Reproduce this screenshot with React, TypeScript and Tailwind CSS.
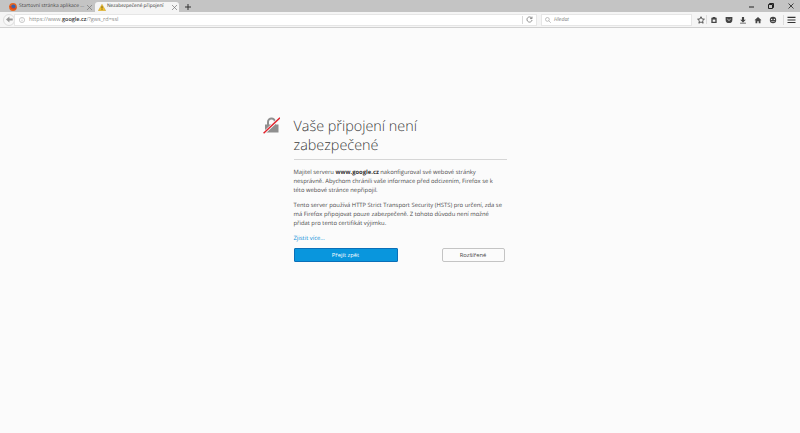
import React from 'react';

const Close = () => (
  <svg width="7" height="7" viewBox="0 0 7 7" className="shrink-0" stroke="#777" strokeWidth="0.7">
    <path d="M1 1l5 5M6 1L1 6" />
  </svg>
);

const FirefoxLogo = () => (
  <svg width="8" height="8" viewBox="0 0 8 8" className="shrink-0">
    <circle cx="4" cy="4" r="3.9" fill="#e8651f" />
    <circle cx="4.4" cy="3.6" r="2.2" fill="#3a5fa8" />
    <path d="M0.3 3C1 6 4 7 6 6.4 7.4 5.8 7.8 4.6 7.8 3.6 7 6 3 6 2 3z" fill="#d9481c" />
  </svg>
);

const WarningIcon = () => (
  <svg width="8" height="7" viewBox="0 0 9 8" className="shrink-0">
    <path d="M4.5 0.3L8.8 7.7H0.2z" fill="#f2c12e" stroke="#b58a14" strokeWidth="0.4" />
    <path d="M4.5 2.6v2.6M4.5 5.9v0.8" stroke="#4a3a0c" strokeWidth="0.9" />
  </svg>
);

const ToolIcon = ({ children }: { children: React.ReactNode }) => (
  <svg width="8" height="8" viewBox="0 0 9 9" className="shrink-0" fill="#444">
    {children}
  </svg>
);

export default function App() {
  return (
    <div className="flex h-[433px] w-[800px] flex-col overflow-hidden bg-[#fbfbfb] font-['Open_Sans',sans-serif] [text-rendering:geometricPrecision]">
      {/* Tab strip */}
      <div className="flex h-[12px] shrink-0 items-end bg-[#c4c4c4]">
        <div className="flex h-[10px] w-[95px] items-center gap-[2px] pl-[9px] pr-[5px]">
          <FirefoxLogo />
          <span className="flex-1 whitespace-nowrap text-[5px] text-[#444]">Startovní stránka aplikace ...</span>
          <Close />
        </div>
        <div className="flex h-[10px] w-[84px] items-center gap-[1px] rounded-t-[3px] bg-[#f5f5f5] pl-[3px] pr-[1px]">
          <WarningIcon />
          <span className="flex-1 whitespace-nowrap text-[4.8px] text-[#333]">Nezabezpečené připojení</span>
          <Close />
        </div>
        <div className="flex h-[10px] items-center pl-[5px]">
          <svg width="8" height="8" viewBox="0 0 8 8" className="shrink-0" stroke="#333" strokeWidth="1">
            <path d="M4 1v6M1 4h6" />
          </svg>
        </div>
        <div className="ml-auto flex h-full items-center gap-[14px] pr-[6px]">
          <svg width="5" height="5" viewBox="0 0 5 5" stroke="#222"><path d="M0 3h5" /></svg>
          <svg width="6" height="6" viewBox="0 0 6 6" fill="none" stroke="#222"><path d="M0.5 1.5h4v4h-4zM1.5 1.5v-1h4v4h-1" /></svg>
          <svg width="6" height="6" viewBox="0 0 6 6" stroke="#222" strokeWidth="0.8"><path d="M0.5 0.5l5 5M5.5 0.5l-5 5" /></svg>
        </div>
      </div>

      {/* Nav toolbar */}
      <div className="flex h-[16px] shrink-0 items-center border-b border-[#d0d0d0] bg-[#f5f5f5]">
        <div className="ml-[3px] flex h-[12px] w-[12px] shrink-0 items-center justify-center rounded-full border border-[#dcdcdc] bg-[#f8f8f8]">
          <svg width="7" height="7" viewBox="0 0 7 7" fill="#999"><path d="M0 3.5L3.4 0.5v2h3.3v2H3.4v2z" /></svg>
        </div>
        <div className="-ml-px flex h-[12px] w-[523px] shrink-0 items-center gap-1 border border-[#e6e6e6] bg-white pl-[4px]">
          <svg width="6" height="6" viewBox="0 0 6 6" fill="none" stroke="#aaa" strokeWidth="0.6">
            <circle cx="3" cy="3" r="2.6" />
            <path d="M3 2.6v1.8M3 1.4v0.6" />
          </svg>
          <span className="text-[5.5px] text-[#8a8a8a]">
            https://www.<span className="font-semibold text-[#333]">google.cz</span>/?gws_rd=ssl
          </span>
          <div className="ml-auto flex h-full items-center gap-[3px] pr-[3px]">
            <div className="h-[8px] w-px bg-[#d8d8d8]" />
            <svg width="7" height="7" viewBox="0 0 7 7" fill="none" stroke="#666" strokeWidth="0.7">
              <path d="M5.8 2.2A2.6 2.6 0 1 0 6.1 4" />
              <path d="M6 0.6v2H4" />
            </svg>
          </div>
        </div>
        <div className="ml-[4px] flex h-[12px] w-[151px] shrink-0 items-center gap-[3px] border border-[#e6e6e6] bg-white pl-[3px]">
          <svg width="6" height="6" viewBox="0 0 6 6" fill="none" stroke="#999" strokeWidth="0.6">
            <circle cx="2.4" cy="2.4" r="1.9" />
            <path d="M3.8 3.8L5.8 5.8" />
          </svg>
          <span className="text-[5.2px] italic text-[#777]">Hledat</span>
        </div>
        <div className="ml-[5px] flex items-center">
          <ToolIcon>
            <path d="M4.5 0.8l1.1 2.5 2.7.3-2 1.8.6 2.7-2.4-1.4-2.4 1.4.6-2.7-2-1.8 2.7-.3z" fill="none" stroke="#333" strokeWidth="0.9" />
          </ToolIcon>
          <div className="ml-[1px] mr-[3px] h-[9px] w-px bg-[#dcdcdc]" />
          <div className="flex items-center gap-[6.7px]">
            <ToolIcon>
              <path d="M1.5 2h6v6h-6zM3 1h3v1.5H3z" />
              <path d="M3 4h3v2.5H3z" fill="#f5f5f5" />
            </ToolIcon>
            <ToolIcon>
              <path d="M0.7 1.2h7.6v3a3.8 3.8 0 0 1-7.6 0z" />
              <path d="M2.6 3.4l1.9 1.7 1.9-1.7" stroke="#f5f5f5" strokeWidth="0.8" fill="none" />
            </ToolIcon>
            <ToolIcon>
              <path d="M3.3 1h2.4v3.2h2L4.5 7.4 1.3 4.2h2zM1.2 7.6h6.6v0.8H1.2z" />
            </ToolIcon>
            <ToolIcon>
              <path d="M4.5 1L8.5 4.8H7.3v3.4H5.3V6H3.7v2.2H1.7V4.8H0.5z" />
            </ToolIcon>
            <ToolIcon>
              <circle cx="4.5" cy="4.5" r="3.6" />
              <circle cx="3" cy="3.8" r="0.8" fill="#f5f5f5" />
              <circle cx="6" cy="3.8" r="0.8" fill="#f5f5f5" />
              <path d="M2.6 5.6h3.8v0.6H2.6z" fill="#f5f5f5" />
            </ToolIcon>
          </div>
          <div className="ml-[6px] mr-[3px] h-[10px] w-px bg-[#dcdcdc]" />
          <svg width="9" height="8" viewBox="0 0 9 8" className="shrink-0" fill="#333">
            <path d="M0.5 0.8h8v1.1h-8zM0.5 3.4h8v1.1h-8zM0.5 6h8v1.1h-8z" />
          </svg>
        </div>
      </div>

      {/* Error page */}
      <div className="flex flex-1 justify-center pr-[31px] pt-[89px]">
        <div className="flex w-[244px]">
          <div className="w-[31px] shrink-0">
            <svg width="17" height="18" viewBox="0 1 17 18">
              <path d="M4 9V6a4.5 4.5 0 0 1 9 0v3h-2V6a2.5 2.5 0 0 0-5 0v3z" fill="#8f8f8f" />
              <path d="M2 8.5h13.5v8H2z" fill="#8f8f8f" />
              <path d="M0.5 17.5L17 2" stroke="#fbfbfb" strokeWidth="3" />
              <path d="M0.6 17.3L17 1.8" stroke="#e0222c" strokeWidth="1.5" />
            </svg>
          </div>
          <div className="w-[213px]">
            <h1 className="border-b border-[#d6d6d6] pb-[4px] text-[14.4px] font-light leading-[19px] text-[#3b3b3b]">
              Vaše připojení není
              <br />
              zabezpečené
            </h1>
            <p className="mt-[8px] whitespace-nowrap text-[5.85px] leading-[9px] text-[#4a4a4a]">
              Majitel serveru <b className="font-bold text-[#333]">www.google.cz</b> nakonfiguroval své webové stránky
              <br />
              nesprávně. Abychom chránili vaše informace před odcizením, Firefox se k
              <br />
              této webové stránce nepřipojil.
            </p>
            <p className="mt-[6px] whitespace-nowrap text-[5.85px] leading-[9px] text-[#4a4a4a]">
              Tento server používá HTTP Strict Transport Security (HSTS) pro určení, zda se
              <br />
              má Firefox připojovat pouze zabezpečeně. Z tohoto důvodu není možné
              <br />
              přidat pro tento certifikát výjimku.
            </p>
            <a className="mt-[6px] block text-[5.85px] leading-[9px] text-[#0a8fd8]">Zjistit více...</a>
            <div className="mt-[5px] flex items-center justify-between pr-[2px]">
              <button className="h-[14px] w-[104px] rounded-[1px] border border-[#0a6fb8] bg-[#0996dd] text-[5.85px] text-white">Přejít zpět</button>
              <button className="h-[14px] w-[63px] rounded-[2px] border border-[#c4c4c4] bg-[#fbfbfb] text-[5.85px] text-[#444]">Rozšířené</button>
            </div>
          </div>
        </div>
      </div>
    </div>
  );
}
